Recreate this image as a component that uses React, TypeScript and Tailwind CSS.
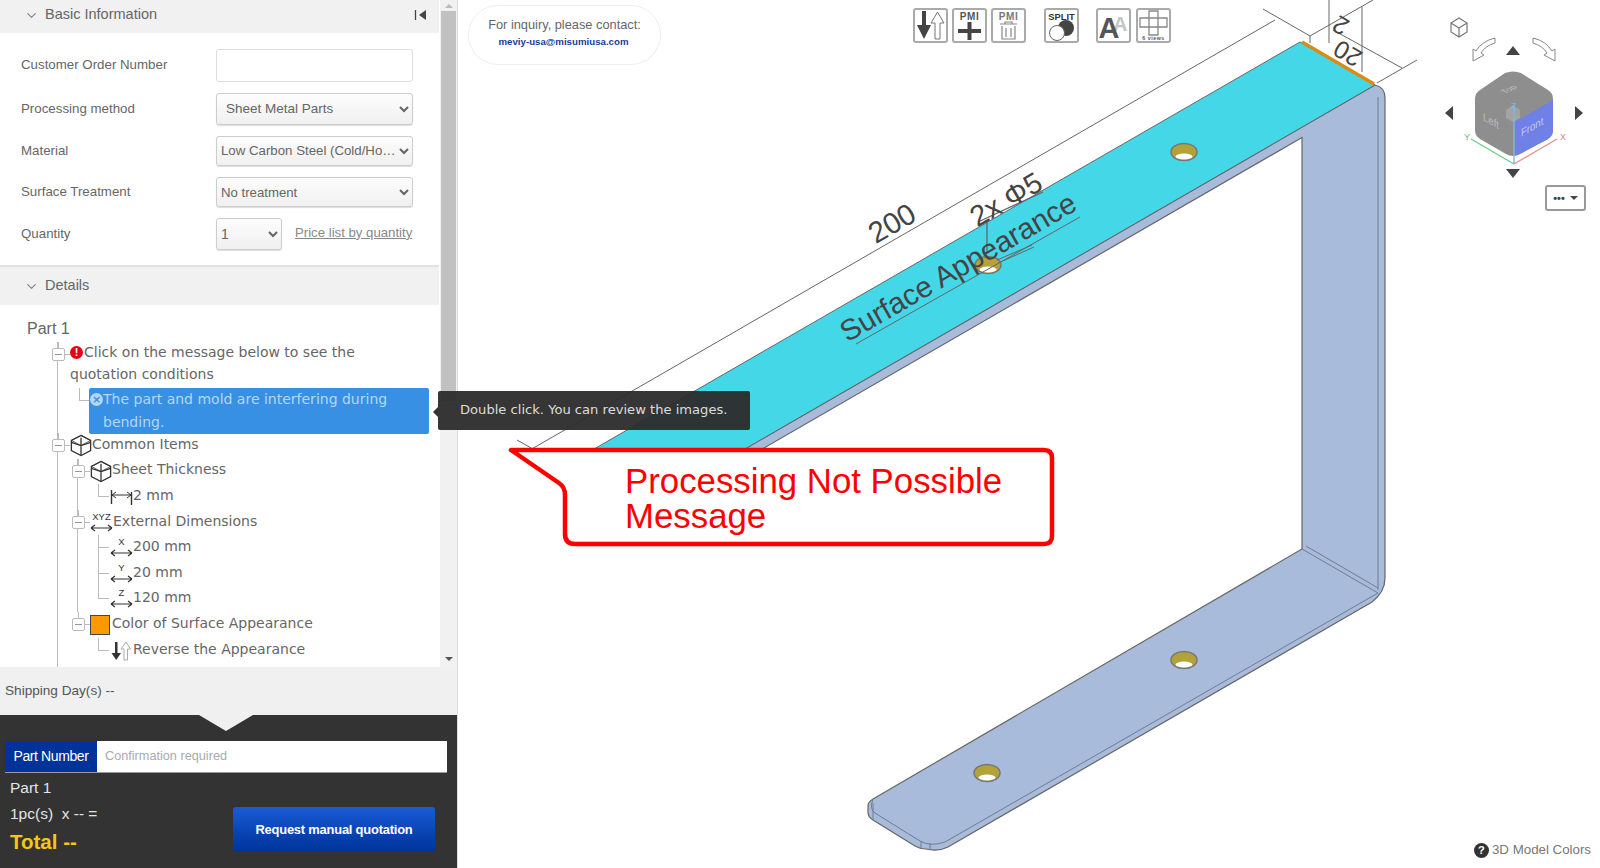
import { ChevronDown } from "lucide-react";
import type { ReactNode } from "react";

const lineColor = "#666";

const Expander = () => (
  <span className="relative mt-[6px] flex h-[13px] w-[13px] shrink-0 items-center justify-center rounded-[2px] border border-[#bbb] bg-white">
    <span className="h-px w-[7px] bg-[#999]" />
    <span className="absolute -top-[7px] left-[5px] h-[6px] border-l border-[#bbb]" />
    <span className="absolute -right-[6px] top-[5px] w-[5px] border-t border-[#bbb]" />
  </span>
);

const Elbow = ({ last }: { last?: boolean }) => (
  <span className="relative w-[11px] shrink-0 self-stretch">
    <span className="absolute left-0 top-0 h-1/2 w-full border-b border-l border-[#bbb]" />
    {!last && <span className="absolute left-0 top-1/2 h-1/2 border-l border-[#bbb]" />}
  </span>
);

const CubeIcon = () => (
  <svg width="22" height="23" viewBox="0 0 24 25" className="shrink-0" fill="none" stroke="#333" strokeWidth="1.4">
    <path d="M12 1.5 L22.5 7 V18 L12 23.5 L1.5 18 V7 Z" />
    <path d="M1.5 9 L12 12.5 L22.5 9 M12 4 V23.5" />
    <path d="M1.5 7 L12 1.5 L22.5 7 L12 12.5 Z" strokeWidth="0.8" />
  </svg>
);

const ThicknessIcon = () => (
  <svg width="23" height="16" viewBox="0 0 23 16" className="shrink-0" fill="none" stroke="#333">
    <path d="M1.5 1 V15 M21.5 3 V16" strokeWidth="1.4" />
    <path d="M2 6 H21 M2 6 L6 3 M2 6 L6 9 M21 6 L17 3 M21 6 L17 9" />
  </svg>
);

const AxisIcon = ({ label }: { label: string }) => (
  <svg width="23" height="24" viewBox="0 0 23 24" className="shrink-0" fill="none" stroke="#333">
    <text x="11.5" y="9" textAnchor="middle" fontSize="9.5" fontFamily="'Liberation Sans', sans-serif" fill="#333" stroke="none">
      {label}
    </text>
    <path d="M1 17 H22 M1 17 L5 14 M1 17 L5 20 M22 17 L18 14 M22 17 L18 20" strokeWidth="1.2" />
  </svg>
);

const SwapIcon = () => (
  <svg width="23" height="20" viewBox="0 0 23 20" className="shrink-0">
    <path d="M5 1 H7.5 V12 H11 L6.2 19 L1.5 12 H5 Z" fill="#333" />
    <path d="M14 19 V8 H11 L16 1 L20.5 8 H17.5 V19 Z" fill="#fff" stroke="#aaa" />
  </svg>
);

const SelectBox = ({ value, className }: { value: string; className: string }) => (
  <select
    defaultValue={value}
    className={`truncate rounded-[3px] border border-[#ccc] bg-gradient-to-b from-[#fdfdfd] to-[#f0f0f0] text-[#666] shadow-[0_1px_1px_#ddd] ${className}`}
  >
    <option value={value}>{value}</option>
  </select>
);

const FormRow = ({ label, children }: { label: string; children: ReactNode }) => (
  <div className="flex items-center">
    <span className="w-[195px] shrink-0 -mt-[1px] text-[13.3px] text-[#666]">{label}</span>
    {children}
  </div>
);

const TreeRow = ({ children, className = "" }: { children: ReactNode; className?: string }) => (
  <div className={`flex h-[25.6px] items-stretch ${className}`}>{children}</div>
);

const RowLabel = ({ children }: { children: ReactNode }) => <span className="-mt-[3px] self-center">{children}</span>;

const Leaf = ({ icon, label, last }: { icon: ReactNode; label: string; last?: boolean }) => (
  <TreeRow className="ml-[20px]">
    <Elbow last={last} />
    <span className="ml-px flex items-center">{icon}</span>
    <RowLabel>{label}</RowLabel>
  </TreeRow>
);

const Tree = () => (
  <div className="h-[362px] overflow-hidden font-['DejaVu_Sans',sans-serif] text-[14px] text-[#666]">
    <div className="flex h-[37px] items-end pb-[1px] pl-[27px] font-['Liberation_Sans',sans-serif] text-[16px]">Part 1</div>
    <ul className="ml-[57px] h-[400px] border-l border-[#bbb]">
      <li className="-ml-[6px] flex items-start">
        <Expander />
        <span className="w-[5px] shrink-0" />
        <div className="w-[300px] -mt-px leading-[22px]">
          <span className="relative -top-[1px] mr-[1px] inline-flex h-[13px] w-[13px] items-center justify-center rounded-full bg-[#e60012] align-middle font-['Liberation_Sans',sans-serif] text-[11px] font-bold text-white">
            !
          </span>
          Click on the message below to see the quotation conditions
        </div>
      </li>
      <li className="-mb-[1px] ml-[21px] mt-[3px] flex h-[46px]">
        <span className="h-[13px] w-[10px] shrink-0 border-b border-l border-[#bbb]" />
        <div className="flex w-[340px] rounded-[2px] bg-[#3790e4] leading-[23px] text-[#b5d6f6]">
          <span className="ml-[1px] mt-[5px] flex h-[13px] w-[13px] shrink-0 items-center justify-center rounded-full bg-[#b5d6f6] text-[11px] font-bold leading-none text-[#3790e4]">
            ×
          </span>
          <span>
            The part and mold are interfering during
            <br />
            bending.
          </span>
        </div>
      </li>
      <li>
        <TreeRow className="-ml-[6px]">
          <Expander />
          <span className="mt-[12px] w-[5px]" />
          <span className="flex items-center">
            <CubeIcon />
          </span>
          <RowLabel>Common Items</RowLabel>
        </TreeRow>
        <ul className="ml-[19px]">
          <li className="border-l border-[#bbb]">
            <TreeRow className="-ml-[6px]">
              <Expander />
              <span className="w-[5px]" />
              <span className="flex items-center">
                <CubeIcon />
              </span>
              <RowLabel>Sheet Thickness</RowLabel>
            </TreeRow>
            <Leaf icon={<ThicknessIcon />} label="2 mm" last />
          </li>
          <li className="border-l border-[#bbb]">
            <TreeRow className="-ml-[6px]">
              <Expander />
              <span className="w-[5px]" />
              <span className="flex items-center">
                <AxisIcon label="XYZ" />
              </span>
              <RowLabel>External Dimensions</RowLabel>
            </TreeRow>
            <Leaf icon={<AxisIcon label="X" />} label="200 mm" />
            <Leaf icon={<AxisIcon label="Y" />} label="20 mm" />
            <Leaf icon={<AxisIcon label="Z" />} label="120 mm" last />
          </li>
          <li className="pl-px">
            <TreeRow className="-ml-[6px]">
              <Expander />
              <span className="w-[5px]" />
              <span className="mr-[2px] flex items-center">
                <span className="h-[20px] w-[20px] border border-[#444] bg-[#ff9900]" />
              </span>
              <RowLabel>Color of Surface Appearance</RowLabel>
            </TreeRow>
            <Leaf icon={<SwapIcon />} label="Reverse the Appearance" last />
          </li>
        </ul>
      </li>
    </ul>
  </div>
);

const SidePanel = () => (
  <aside className="flex h-[868px] w-[458px] shrink-0 flex-col border-r border-[#ddd] font-['Liberation_Sans',sans-serif]">
    <div className="flex h-[667px] shrink-0">
      <div className="w-[439px] shrink-0 bg-white">
        <div className="relative flex h-[30px] items-center bg-[#f1f1f1] pl-[24px] text-[14.5px] text-[#666]">
          <ChevronDown size={15} className="mr-[6px] text-[#888]" />
          Basic Information
          <svg width="14" height="12" viewBox="0 0 14 12" className="absolute left-[414px] top-[9px]">
            <path d="M1.5 1 V11" stroke="#444" strokeWidth="1.3" />
            <path d="M12 1 V11 L5 6 Z" fill="#444" />
          </svg>
        </div>
        <div className="flex h-[235px] flex-col gap-[11px] border-t-[3px] border-[#f1f1f1] pl-[21px] pt-[16px]">
          <FormRow label="Customer Order Number">
            <input className="h-[33px] w-[197px] rounded-[3px] border border-[#ddd] bg-white" />
          </FormRow>
          <FormRow label="Processing method">
            <SelectBox value="Sheet Metal Parts" className="h-[32px] w-[197px] pl-[5px] pb-[2px] text-[13.5px]" />
          </FormRow>
          <FormRow label="Material">
            <SelectBox value="Low Carbon Steel (Cold/Hot Rolled)" className="h-[30px] w-[197px] pb-[2px] text-[13.25px]" />
          </FormRow>
          <FormRow label="Surface Treatment">
            <SelectBox value="No treatment" className="h-[30px] w-[197px] text-[13.2px]" />
          </FormRow>
          <FormRow label="Quantity">
            <SelectBox value="1" className="h-[32px] w-[66px] text-[14px]" />
            <a className="ml-[13px] -mt-[3px] text-[13.2px] text-[#888] underline">Price list by quantity</a>
          </FormRow>
        </div>
        <div className="flex h-[40px] items-center border-t-2 border-[#e2e2e2] bg-[#f1f1f1] pl-[24px] text-[14.5px] text-[#666]">
          <ChevronDown size={15} className="mr-[6px] text-[#888]" />
          Details
        </div>
        <Tree />
      </div>
      <div className="ml-[1px] flex w-[17px] shrink-0 flex-col bg-[#f1f1f1]">
        <div className="flex h-[11px] items-center justify-center">
          <span className="border-x-[4px] border-b-[4px] border-x-transparent border-b-[#bbb]" />
        </div>
        <div className="mx-[1px] h-[390px] bg-[#c1c1c1]" />
        <div className="flex-1" />
        <div className="flex h-[17px] items-center justify-center">
          <span className="border-x-[4px] border-t-[4px] border-x-transparent border-t-[#555]" />
        </div>
      </div>
    </div>
    <div className="flex h-[48px] items-center bg-[#f0f0f0] pl-[5px] text-[13.6px] text-[#555]">Shipping Day(s) --</div>
    <div className="relative flex-1 bg-[#333] px-[5px] pt-[26px]">
      <svg width="54" height="16" viewBox="0 0 54 16" className="absolute left-[199px] top-0">
        <path d="M0 0 H54 L27 16 Z" fill="#f0f0f0" />
      </svg>
      <div className="flex h-[32px] w-[442px] border-b border-[#999] bg-white text-[14px]">
        <span className="flex w-[92px] items-center justify-center bg-[#003399] tracking-[-0.4px] text-white">Part Number</span>
        <span className="flex items-center pl-[8px] text-[12.7px] text-[#aaa]">Confirmation required</span>
      </div>
      <div className="mt-[2px] flex">
        <div className="w-[228px] pl-[5px] text-[15.5px] text-[#e4e4e4]">
          <div className="h-[26px] leading-[26px]">Part 1</div>
          <div className="h-[26px] leading-[26px]">1pc(s)&nbsp; x -- =</div>
          <div className="h-[30px] text-[20.5px] font-bold leading-[30px] text-[#f5c518]">Total --</div>
        </div>
        <button className="mt-[32px] h-[45px] w-[202px] rounded-[3px] bg-gradient-to-b from-[#1a5bd6] to-[#003399] text-[12.9px] font-bold tracking-[-0.2px] text-white">
          Request manual quotation
        </button>
      </div>
    </div>
  </aside>
);

const ToolBtn = ({ children, className = "" }: { children: ReactNode; className?: string }) => (
  <div className={`h-[35px] w-[35px] shrink-0 rounded-[3px] border-2 border-[#aaa] bg-white ${className}`}>
    <svg width="31" height="31" viewBox="0 0 31 31" fontFamily="'Liberation Sans', sans-serif">
      {children}
    </svg>
  </div>
);

const Toolbar = () => (
  <div className="absolute left-[455px] top-[8px] flex">
    <ToolBtn>
      <path d="M7 1 H11 V15 H16 L9 29 L2 15 H7 Z" fill="#444" />
      <path d="M20 29 V13 H16 L22.5 2 L29 13 H25 V29 Z" fill="#fff" stroke="#777" />
    </ToolBtn>
    <ToolBtn className="ml-[4px]">
      <text x="15.5" y="10" textAnchor="middle" fontSize="10" fontWeight="bold" letterSpacing="0.6" fill="#555">PMI</text>
      <path d="M13.5 12 H17.5 V19 H27 V23 H17.5 V30 H13.5 V23 H4 V19 H13.5 Z" fill="#444" />
    </ToolBtn>
    <ToolBtn className="ml-[4px]">
      <text x="15.5" y="10" textAnchor="middle" fontSize="10" fontWeight="bold" letterSpacing="0.6" fill="#777">PMI</text>
      <path d="M7 14 H24 M9 16 V29 H22 V16 M13 18 V27 M18 18 V27 M12 14 V12 H19 V14" fill="none" stroke="#888" strokeWidth="1.2" />
    </ToolBtn>
    <ToolBtn className="ml-[18px]">
      <circle cx="20" cy="18" r="8" fill="#444" />
      <circle cx="11" cy="23" r="7.5" fill="#fff" stroke="#666" />
      <text x="15.5" y="10" textAnchor="middle" fontSize="9.3" fontWeight="bold" fill="#333">SPLIT</text>
    </ToolBtn>
    <ToolBtn className="ml-[17px]">
      <text x="15" y="21" fontSize="20" fontWeight="bold" fill="#c4c4c4">A</text>
      <text x="0.5" y="28" fontSize="29" fontWeight="bold" fill="#555">A</text>
    </ToolBtn>
    <ToolBtn className="ml-[5px]">
      <path d="M11 1 H20 V8 H29 V17 H20 V25 H11 V17 H2 V8 H11 Z M11 8 H20 V17 H11 Z" fill="none" stroke="#888" strokeWidth="1.3" />
      <text x="15.5" y="30" textAnchor="middle" fontSize="5.2" fontWeight="bold" letterSpacing="0.6" fill="#555">6 views</text>
    </ToolBtn>
  </div>
);

const Hole = ({ cx, cy }: { cx: number; cy: number }) => (
  <g>
    <ellipse cx={cx} cy={cy} rx="13" ry="8.5" fill="#b3a23a" stroke="#777" strokeWidth="1.5" />
    <ellipse cx={cx} cy={cy + 4.5} rx="8.5" ry="3" fill="#fff" />
  </g>
);

const PartDrawing = () => (
  <svg viewBox="458 0 1142 868" className="absolute inset-0 h-full w-full" fontFamily="'Liberation Sans', sans-serif">
    <path d="M1375 85 Q1385 87 1385 98 V578 Q1385 592 1372 602 L948 847 Q938 852 926 849 Q920 849 915 846 L873 820 Q868 817 868 812 V806 Q868 802 873 799 L1302 549 V137.5 L660 508 V498 Z" fill="#a8bbdb" stroke={lineColor} strokeWidth="1.2" />
    <path d="M1378 97 V590 M1302 549 L1378 593 M1306 546 L1378 588 M1378 593 L945 842 Q930 847 920 841 L875 813 Q869 809 873 799 M873 803 V820 M921 841 V849 M930 843 V850" fill="none" stroke="#6f7c92" strokeWidth="1" />
    <path d="M1300 42 L1375 85 L660 498 L575 460 Z" fill="#44d7e8" stroke={lineColor} strokeWidth="1" />
    <path d="M1302 42 L1374 84" stroke="#d98c14" strokeWidth="3.5" />
    <Hole cx={1184} cy={152} />
    <Hole cx={988} cy={265} />
    <Hole cx={1184} cy={660} />
    <Hole cx={987} cy={773} />

    <g fill="none" stroke={lineColor} strokeWidth="1">
      <path d="M530 450 L1275 20 M517 440 L533 449 M1263 9 L1310 36 V43 M1310 36 L1373 0" />
      <path d="M1329 0 V43 M1362 7 V72 M1333 30 L1402 68 M1377 83 L1417 60" />
      <path d="M978 222 L1043 192 M987 222 V252" strokeWidth="1.3" />
      <path d="M856 344 L1080 217 M997 260 L1032 245 M998 263 L1034 247" />
    </g>
    <g fill="#444">
      <text transform="translate(897 232) rotate(-30)" textAnchor="middle" fontSize="29.5">200</text>
      <text transform="translate(1011 208) rotate(-30)" textAnchor="middle" fontSize="29">2x Φ5</text>
      <text transform="translate(963 276) rotate(-30)" textAnchor="middle" fontSize="29.5">Surface Appearance</text>
      <text transform="translate(1352 46) rotate(210)" textAnchor="middle" fontSize="25">20</text>
      <text transform="translate(1345 18) rotate(210)" textAnchor="middle" fontSize="25">2</text>
    </g>
  </svg>
);

const NavCube = () => (
  <svg viewBox="1420 0 180 230" className="absolute left-[962px] top-0 h-[230px] w-[180px]" fontFamily="'Liberation Sans', sans-serif">
    <path d="M1459 18 L1467 23 V32 L1459 37 L1451 32 V23 Z M1451 23 L1459 28 L1467 23 M1459 28 V37" fill="none" stroke="#777" strokeWidth="1.2" />
    <path d="M1495 43 Q1485 46 1481 53 L1484 55 L1473 61 L1473 49 L1476 51 Q1482 41 1495 38 Z" fill="#fff" stroke="#888" />
    <path d="M1533 43 Q1543 46 1547 53 L1544 55 L1555 61 L1555 49 L1552 51 Q1546 41 1533 38 Z" fill="#fff" stroke="#888" />
    <path d="M1513 46 L1520 55 H1506 Z M1513 178 L1520 169 H1506 Z M1445 113 L1453 106 V120 Z M1583 113 L1575 106 V120 Z" fill="#444" />
    <path d="M1505 73 Q1513 70 1521 73 L1548 90 Q1553 93 1553 99 V130 Q1553 136 1548 139 L1520 154 Q1513 158 1506 154 L1480 139 Q1475 136 1475 130 V99 Q1475 93 1480 90 Z" fill="#8e8e8e" />
    <path d="M1553 100 V130 Q1553 136 1548 139 L1520 154 Q1516 156 1515 155 V122 Z" fill="#6f80e6" />
    <path d="M1513 105 L1520 110 V118 L1513 122 L1506 118 V110 Z" fill="#a3a3a3" />
    <text transform="matrix(0.87 -0.45 0.87 0.45 1505 94)" fontSize="9" fill="#bbb">Top</text>
    <text transform="matrix(0.87 0.5 0 1 1483 120)" fontSize="11" fill="#bbb">Left</text>
    <text transform="matrix(0.87 -0.5 0 1 1521 137)" fontSize="11" fill="#c4c9ee">Front</text>
    <path d="M1514 164 L1471 139" stroke="#5fd08a" strokeWidth="1.2" />
    <path d="M1514 164 L1557 139" stroke="#f08a8a" strokeWidth="1.2" />
    <path d="M1514 164 V105" stroke="#7ab8ea" strokeWidth="1.4" />
    <text x="1464" y="140" fontSize="9" fill="#4fc77c">Y</text>
    <text x="1560" y="140" fontSize="9" fill="#ef7c7c">X</text>
    <text x="1511" y="109" fontSize="9" fill="#7ab8ea">Z</text>
  </svg>
);

const Viewer = () => (
  <main className="relative flex-1 bg-white font-['Liberation_Sans',sans-serif]">
    <PartDrawing />
    <div className="absolute left-[10px] top-[5px] flex h-[60px] w-[193px] flex-col items-center justify-center rounded-[30px] border border-[#eee] bg-white pb-[5px]">
      <span className="text-[12.8px] text-[#666]">For inquiry, please contact:</span>
      <span className="mt-[1px] -ml-[2px] text-[9.7px] font-bold text-[#1a3c9c]">meviy-usa@misumiusa.com</span>
    </div>
    <Toolbar />
    <NavCube />
    <div className="absolute left-[1087px] top-[185px] flex h-[26px] w-[41px] items-center justify-center gap-[5px] rounded-[3px] border-2 border-[#999] bg-white">
      <span className="text-[11px] font-bold leading-none text-[#444]">•••</span>
      <span className="border-x-[4px] border-t-[4px] border-x-transparent border-t-[#444]" />
    </div>
    <div className="absolute bottom-[8px] right-[9px] flex items-center gap-[3px] text-[13.3px] text-[#777]">
      <span className="flex h-[15px] w-[15px] items-center justify-center rounded-full bg-[#333] text-[11px] font-bold text-white">?</span>
      3D Model Colors
    </div>
  </main>
);

const Callout = () => (
  <>
    <svg viewBox="0 0 560 112" className="absolute left-[500px] top-[440px] h-[112px] w-[560px]">
      <path
        d="M11 10 H544 Q552 10 552 18 V96 Q552 104 544 104 H75 Q65 104 65 94 V55 Q65 47 59 43 Z"
        fill="#fff"
        stroke="#f00"
        strokeWidth="4.5"
        strokeLinejoin="round"
      />
    </svg>
    <div className="absolute left-[625px] top-[463px] font-['Liberation_Sans',sans-serif] text-[34.8px] leading-[35px] text-[#f00]">
      Processing Not Possible
      <br />
      Message
    </div>
  </>
);

export default function App() {
  return (
    <div className="relative flex h-[868px] w-[1600px] overflow-hidden bg-white">
      <SidePanel />
      <Viewer />
      <Callout />
      <div className="absolute left-[438px] top-[391px] flex h-[39px] w-[312px] items-center rounded-[2px] bg-[#2b2b2b]/95 pb-[2px] pl-[22px] font-['DejaVu_Sans',sans-serif] text-[13.1px] text-[#ddd]">
        <span className="absolute -left-[5px] top-[16px] border-y-[5px] border-r-[5px] border-y-transparent border-r-[#333]" />
        Double click. You can review the images.
      </div>
    </div>
  );
}
